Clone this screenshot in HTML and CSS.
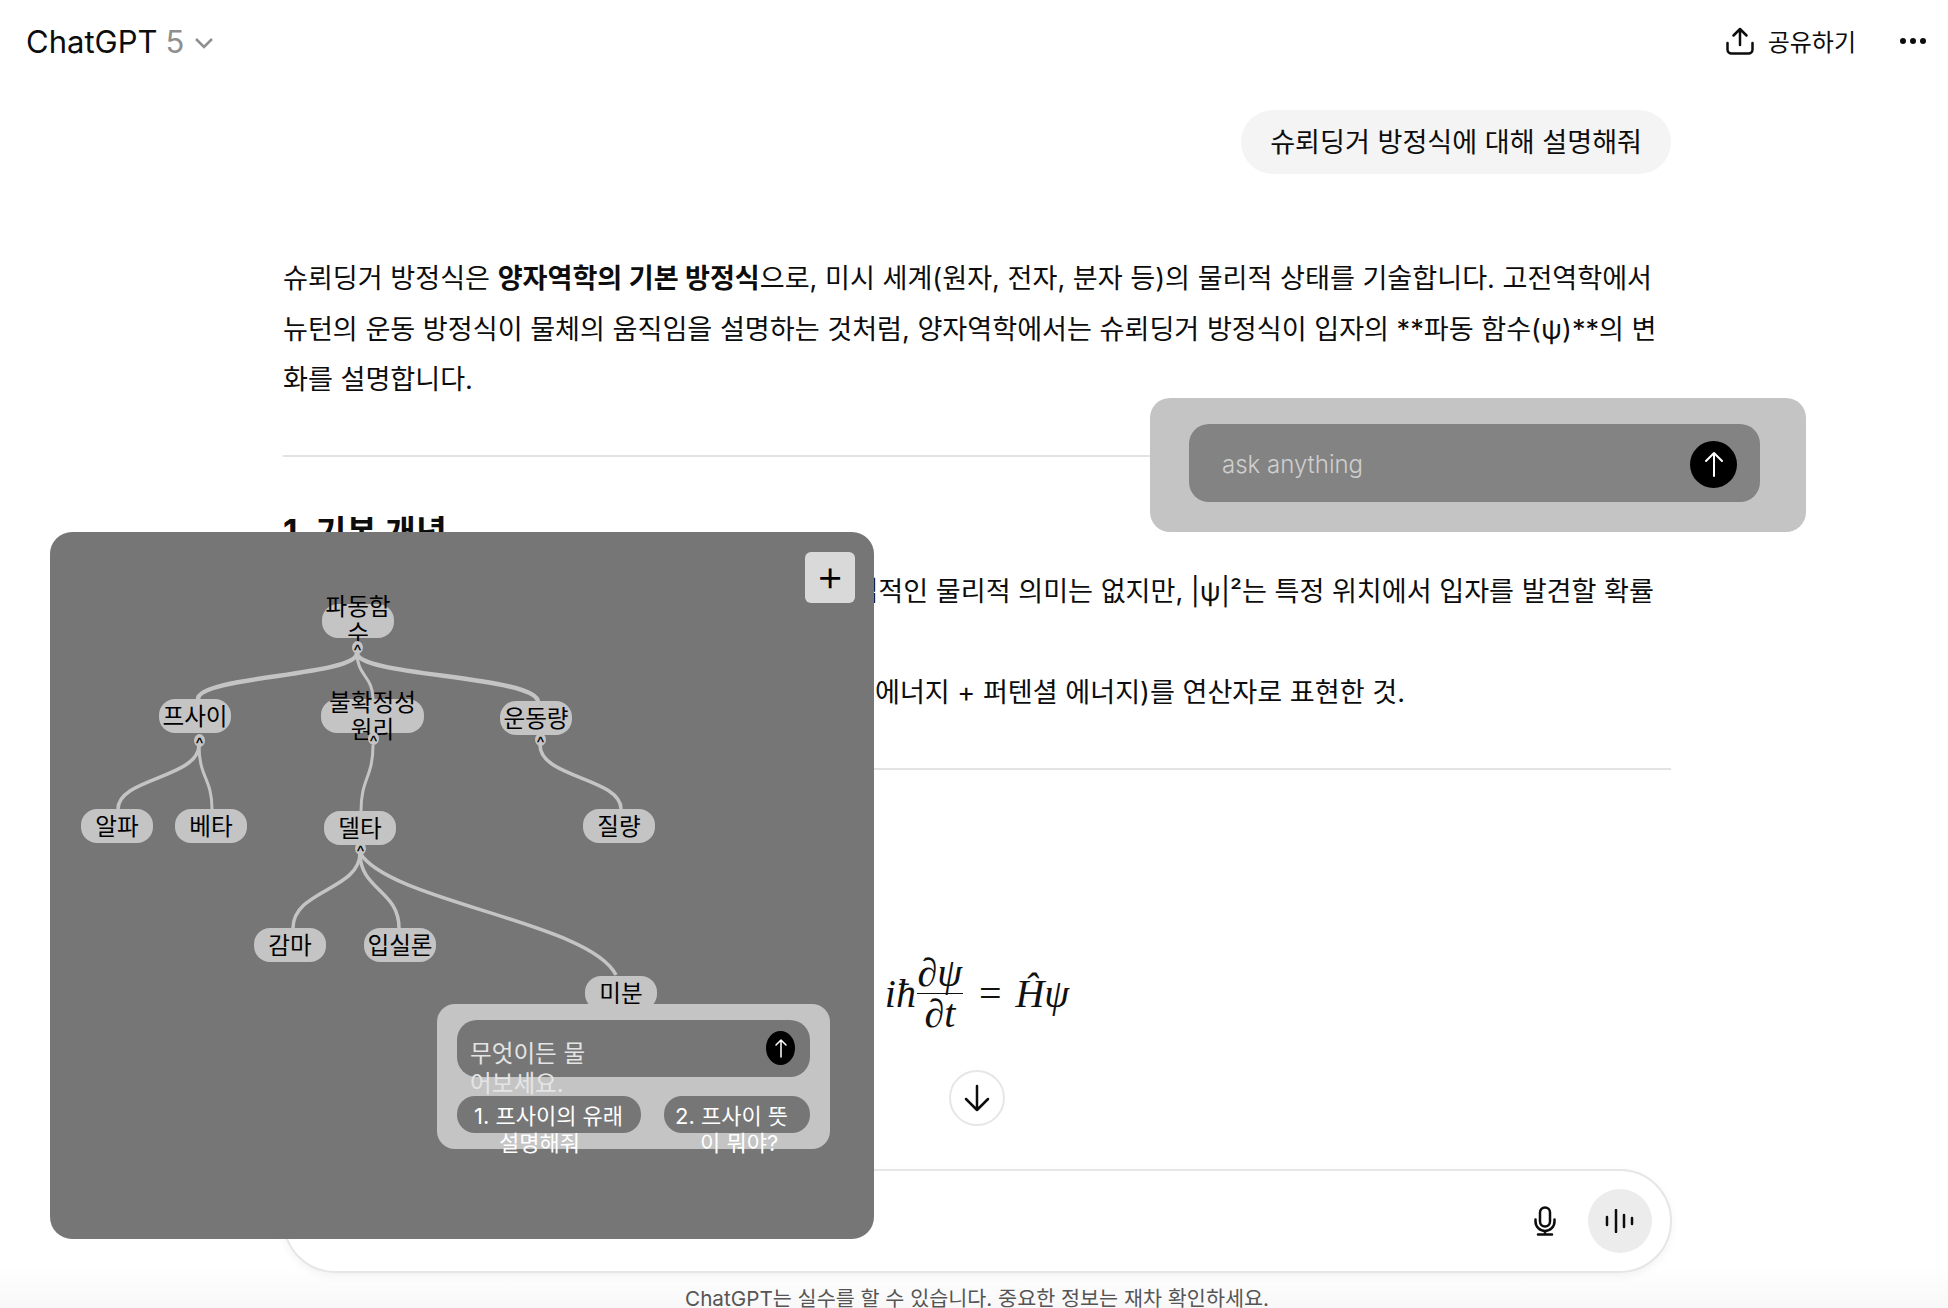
FILE: index.html
```html
<!DOCTYPE html>
<html lang="ko">

<head>
    <meta charset="UTF-8">
    <meta name="viewport" content="width=device-width, initial-scale=1.0">
    <title>ChatGPT</title>
    <link rel="stylesheet" href="styles.css">
</head>

<body>
    <div class="page">
        <header class="topbar">
            <div class="model">
                <span>ChatGPT</span>
                <span class="model-num">5</span>
                <svg class="chevron" width="20" height="12" viewBox="0 0 20 12"><path d="M2 2l8 8 8-8" /></svg>
            </div>
            <div class="actions">
                <svg class="share-icon" width="28" height="28" viewBox="0 0 28 28"><path d="M14 18V2M7.500 8.500L14 2l6.500 6.500M1.500 16v6.500a4 4 0 0 0 4 4h17a4 4 0 0 0 4-4V16" /></svg>
                <span class="share-label">공유하기</span>
                <div class="more"><i></i><i></i><i></i></div>
            </div>
        </header>

        <!-- Conversation -->
        <main class="chat">
            <div class="user-row">
                <div class="bubble">슈뢰딩거 방정식에 대해 설명해줘</div>
            </div>
            <p class="answer">슈뢰딩거 방정식은 <strong>양자역학의 기본 방정식</strong>으로, 미시 세계(원자, 전자, 분자 등)의 물리적 상태를 기술합니다. 고전역학에서 뉴턴의 운동 방정식이 물체의 움직임을 설명하는 것처럼, 양자역학에서는 슈뢰딩거 방정식이 입자의 **파동 함수(ψ)**의 변화를 설명합니다.</p>
            <hr class="rule rule-first">
            <h3 class="section-title">1. 기본 개념</h3>
            <ul class="concepts">
                <li class="concept-wave">파동 함수(ψ): 입자의 상태를 나타내며, 직접적인 물리적 의미는 없지만, |ψ|²는 특정 위치에서 입자를 발견할 확률</li>
                <li>밀도를 나타냅니다.</li>
                <li class="concept-energy">해밀토니안(Ĥ): 시스템의 총 에너지(운동 에너지 + 퍼텐셜 에너지)를 연산자로 표현한 것.</li>
            </ul>
            <hr class="rule rule-second">
            <div class="equation">
                <span class="eq-italic">iħ</span>
                <span class="fraction">
                    <span class="eq-italic">∂ψ</span>
                    <span class="eq-italic frac-bottom">∂t</span>
                </span>
                <span class="eq-equals">=</span>
                <span class="eq-italic">Ĥψ</span>
            </div>
            <button class="scroll-down">
                <svg width="26" height="28" viewBox="0 0 26 28"><path d="M13 2v24M2 15l11 11 11-11" /></svg>
            </button>
        </main>

        <!-- Composer -->
        <div class="composer-wrap">
            <div class="composer">
                <svg class="mic" width="26" height="30" viewBox="0 0 26 30"><rect x="8" y="1.500" width="10" height="19" rx="5" /><path d="M3.500 13.500v2a9.500 9.500 0 0 0 19 0v-2M13 25v3.500M6 28.500h14" /></svg>
                <div class="voice">
                    <svg width="30" height="24" viewBox="0 0 30 24"><path d="M2 8v8M11 1v22M19 6v12M27 9v6" /></svg>
                </div>
            </div>
            <div class="disclaimer">ChatGPT는 실수를 할 수 있습니다. 중요한 정보는 재차 확인하세요.</div>
        </div>

        <!-- Floating ask box -->
        <div class="ask-card">
            <div class="ask-input">
                <span class="ask-text">ask anything</span>
                <div class="send send-large">
                    <svg width="20" height="26" viewBox="0 0 20 26"><path d="M10 25V2M2 10l8-8 8 8" /></svg>
                </div>
            </div>
        </div>

        <!-- Mind map panel -->
        <div class="mindmap">
            <button class="map-add">+</button>

            <svg class="edges" width="824" height="706" viewBox="0 0 824 706">
                <path class="edge-thick" d="M307 121C307 144 148 144 148 167" />
                <path class="edge-thin" d="M307 121C307 144 323 144 323 167" />
                <path class="edge-thick" d="M307 121C307 144 488 144 488 170" />
                <path class="edge-mid" d="M149 213C149 246 68 246 68 277" />
                <path class="edge-thin" d="M149 213C149 246 162 246 162 277" />
                <path class="edge-thin" d="M323 213C323 246 311 246 311 279" />
                <path class="edge-mid" d="M490 213C490 246 571 246 571 277" />
                <path class="edge-mid" d="M310 321C310 358 243 358 243 396" />
                <path class="edge-mid" d="M310 321C310 358 349 358 349 396" />
                <path class="edge-mid" d="M310 321C340 370 540 390 566 443" />
            </svg>

            <div class="node node-wave">파동함수</div>
            <div class="node node-psi">프사이</div>
            <div class="node node-wide node-uncertainty">불확정성 원리</div>
            <div class="node node-momentum">운동량</div>
            <div class="node node-alpha">알파</div>
            <div class="node node-beta">베타</div>
            <div class="node node-delta">델타</div>
            <div class="node node-mass">질량</div>
            <div class="node node-gamma">감마</div>
            <div class="node node-epsilon">입실론</div>
            <div class="node node-diff">미분</div>

            <div class="toggle toggle-wave">^</div>
            <div class="toggle toggle-psi">^</div>
            <div class="toggle toggle-uncertainty">^</div>
            <div class="toggle toggle-momentum">^</div>
            <div class="toggle toggle-delta">^</div>

            <div class="map-card">
                <div class="map-input">
                    <span class="map-placeholder">무엇이든 물어보세요.</span>
                    <div class="send send-small">
                        <svg width="12" height="20" viewBox="0 0 12 20"><path d="M6 19V2M1 7l5-5 5 5" /></svg>
                    </div>
                </div>
                <div class="chips">
                    <div class="chip chip-one"><span>1. 프사이의 유래 설명해줘</span></div>
                    <div class="chip chip-two"><span>2. 프사이 뜻이 뭐야?</span></div>
                </div>
            </div>
        </div>
    </div>
</body>

</html>
```

FILE: styles.css
```css
/* Reset */

* {
    margin: 0;
    padding: 0;
    box-sizing: border-box;
}

body {
    font-family: Inter, 'Noto Sans CJK KR', sans-serif;
    background-color: #ffffff;
    color: #0d0d0d;
}

svg path,
svg rect {
    fill: none;
}

.page {
    position: relative;
    display: flex;
    flex-direction: column;
    height: 1308px;
    overflow: hidden;
}
/* Top bar */

.topbar {
    display: flex;
    justify-content: space-between;
    align-items: center;
    height: 82px;
    flex-shrink: 0;
    padding: 0 22px 0 26px;
}

.model {
    display: flex;
    align-items: center;
    font-size: 31px;
}

.model-num {
    color: #8f8f8f;
    margin-left: 8px;
}

.chevron {
    margin-left: 10px;
    margin-top: 3px;
}

.chevron path {
    stroke: #8f8f8f;
    stroke-width: 2.5;
}

.actions {
    display: flex;
    align-items: center;
}

.share-icon path {
    stroke: #0d0d0d;
    stroke-width: 2.5;
    stroke-linecap: round;
    stroke-linejoin: round;
}

.share-label {
    font-size: 24px;
    margin-left: 14px;
    margin-bottom: 2px;
}

.more {
    display: flex;
    gap: 4px;
    margin-left: 44px;
}

.more i {
    width: 6px;
    height: 6px;
    border-radius: 50%;
    background-color: #0d0d0d;
}
/* Conversation */

.chat {
    position: relative;
    flex: 1;
    width: 1388px;
    margin-left: 283px;
    font-size: 27.1px;
}

.user-row {
    display: flex;
    justify-content: flex-end;
    padding-top: 28px;
}

.bubble {
    height: 64px;
    line-height: 66px;
    padding: 0 29px;
    border-radius: 32px;
    background-color: #f4f4f4;
}

.answer {
    margin-top: 80px;
    line-height: 50.5px;
}

.answer strong {
    font-weight: 700;
}

.rule {
    border: none;
    height: 2px;
    background-color: #e3e3e3;
}

.rule-first {
    margin-top: 49px;
}

.section-title {
    margin-top: 55px;
    font-size: 33.5px;
    line-height: 40px;
    font-weight: 700;
}

.concepts {
    list-style: none;
    margin-top: 15px;
    line-height: 50.5px;
}

.concept-wave {
    padding-left: 102px;
}

.concept-energy {
    padding-left: 130px;
}

.rule-second {
    margin-top: 50px;
}

.equation {
    display: flex;
    justify-content: center;
    align-items: center;
    margin-top: 181px;
    height: 84px;
    font-family: 'Liberation Serif', serif;
    font-size: 40px;
    color: #111111;
}

.eq-italic {
    font-style: italic;
}

.fraction {
    display: flex;
    flex-direction: column;
    align-items: center;
    width: 46px;
    margin-left: 1px;
    line-height: 40px;
}

.frac-bottom {
    width: 100%;
    text-align: center;
    border-top: 1.5px solid #111111;
}

.eq-equals {
    margin: 0 14px 0 16px;
    font-size: 40px;
}

.scroll-down {
    position: absolute;
    left: 666px;
    top: 988px;
    width: 56px;
    height: 56px;
    display: flex;
    align-items: center;
    justify-content: center;
    border: 2px solid #e6e6e6;
    border-radius: 50%;
    background-color: #ffffff;
}

.scroll-down path {
    stroke: #0d0d0d;
    stroke-width: 2.5;
    stroke-linecap: round;
    stroke-linejoin: round;
}
/* Composer */

.composer-wrap {
    flex-shrink: 0;
    height: 139px;
    background: linear-gradient(to bottom, #ffffff 70%, #f8f8f8 100%);
}

.composer {
    display: flex;
    justify-content: flex-end;
    align-items: center;
    width: 1389px;
    height: 104px;
    margin-left: 283px;
    padding-right: 18px;
    border: 2px solid #e6e6e6;
    border-radius: 52px;
    background-color: #ffffff;
    box-shadow: 0 3px 8px rgba(0, 0, 0, 0.05);
}

.mic rect,
.mic path {
    stroke: #0d0d0d;
    stroke-width: 2.5;
    stroke-linecap: round;
}

.voice {
    display: flex;
    align-items: center;
    justify-content: center;
    width: 64px;
    height: 64px;
    margin-left: 30px;
    border-radius: 50%;
    background-color: #ececec;
}

.voice path {
    stroke: #0d0d0d;
    stroke-width: 2.5;
    stroke-linecap: round;
}

.disclaimer {
    text-align: center;
    font-size: 20.7px;
    line-height: 30px;
    margin-top: 11px;
    margin-left: 6px;
    color: #555555;
}
/* Floating ask box */

.ask-card {
    position: absolute;
    left: 1150px;
    top: 398px;
    width: 656px;
    height: 134px;
    padding: 26px 46px 30px 39px;
    border-radius: 20px;
    background-color: #c4c4c4;
}

.ask-input {
    display: flex;
    justify-content: space-between;
    align-items: center;
    height: 78px;
    padding: 2px 23px 0 33px;
    border-radius: 20px;
    background-color: #838383;
}

.ask-text {
    font-size: 24px;
    font-weight: 300;
    color: #cfcfcf;
}

.send {
    display: flex;
    align-items: center;
    justify-content: center;
    border-radius: 50%;
    background-color: #000000;
}

.send path {
    stroke: #ffffff;
    stroke-width: 1.5;
    stroke-linecap: round;
    stroke-linejoin: round;
}

.send-large {
    width: 47px;
    height: 47px;
}

.send-large path {
    stroke-width: 2;
}

.send-small {
    position: absolute;
    right: 15px;
    top: 11px;
    width: 29px;
    height: 34px;
}
/* Mind map panel */

.mindmap {
    position: absolute;
    left: 50px;
    top: 532px;
    width: 824px;
    height: 707px;
    border-radius: 22px;
    background-color: #767676;
}

.map-add {
    position: absolute;
    left: 755px;
    top: 20px;
    width: 50px;
    height: 51px;
    padding-bottom: 5px;
    border: none;
    border-radius: 6px;
    background-color: #d9d9d9;
    font-family: inherit;
    font-size: 44px;
    font-weight: 300;
    line-height: 1;
    color: #000000;
}

.edges {
    position: absolute;
    left: 0;
    top: 0;
}

.edges path {
    stroke: #c4c4c4;
}

.edge-thick {
    stroke-width: 4.5;
}

.edge-mid {
    stroke-width: 3.5;
}

.edge-thin {
    stroke-width: 3;
}

.node {
    position: absolute;
    display: flex;
    align-items: center;
    justify-content: center;
    width: 72px;
    height: 34px;
    padding: 0 2px;
    border-radius: 16px;
    background-color: #c4c4c4;
    color: #000000;
    font-size: 23.6px;
    line-height: 27px;
    text-align: center;
}

.node-wide {
    width: 103px;
}

.node-wave { left: 272px; top: 72px; padding-bottom: 2px; }
.node-psi { left: 109px; top: 167px; }
.node-uncertainty { left: 271px; top: 167px; }
.node-momentum { left: 450px; top: 169px; }
.node-alpha { left: 31px; top: 277px; }
.node-beta { left: 125px; top: 277px; }
.node-delta { left: 274px; top: 279px; }
.node-mass { left: 533px; top: 277px; }
.node-gamma { left: 204px; top: 396px; }
.node-epsilon { left: 314px; top: 396px; }
.node-diff { left: 535px; top: 444px; }

.toggle {
    position: absolute;
    width: 11px;
    height: 13px;
    border-radius: 50%;
    background-color: #c4c4c4;
    color: #000000;
    font-size: 18px;
    line-height: 20px;
    text-align: center;
}

.toggle-wave { left: 302px; top: 109px; }
.toggle-psi { left: 144px; top: 202px; }
.toggle-uncertainty { left: 318px; top: 200px; }
.toggle-momentum { left: 485px; top: 201px; }
.toggle-delta { left: 305px; top: 310px; }

.map-card {
    position: absolute;
    left: 387px;
    top: 472px;
    width: 393px;
    height: 145px;
    padding: 16px 20px;
    border-radius: 18px;
    background-color: #c4c4c4;
}

.map-input {
    position: relative;
    height: 57px;
    padding: 19px 60px 0 13px;
    border-radius: 20px;
    background-color: #767676;
}

.map-placeholder {
    display: block;
    width: 125px;
    font-size: 23.6px;
    line-height: 30px;
    color: #e4e4e4;
}

.chips {
    display: flex;
    justify-content: space-between;
    margin-top: 19px;
}

.chip {
    height: 37px;
    padding-top: 7px;
    border-radius: 18px;
    background-color: #767676;
    color: #ffffff;
    font-size: 22px;
    line-height: 27px;
}

.chip span {
    display: block;
    text-indent: -25px;
}

.chip-one {
    width: 184px;
    padding-left: 42px;
}

.chip-one span {
    width: 130px;
}

.chip-two {
    width: 146px;
    padding-left: 36px;
}

.chip-two span {
    width: 95px;
}
```
